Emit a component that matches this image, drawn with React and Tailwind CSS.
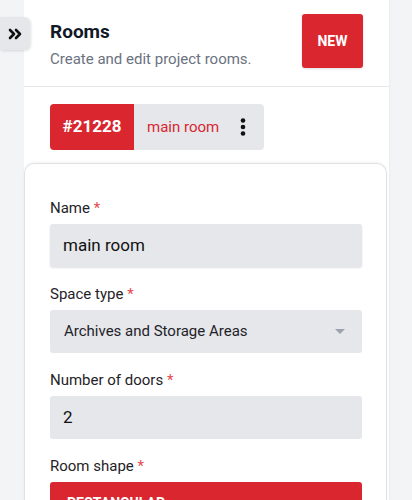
import React from "react";

function Label({ children }) {
  return (
    <div className="text-[15px] leading-[20px] text-[#1f2328] mb-[6px]">
      {children} <span className="text-[#e5484d]">*</span>
    </div>
  );
}

export default function App() {
  return (
    <div
      className="relative w-[412px] h-[500px] overflow-hidden bg-[#f3f4f6] flex"
      style={{ fontFamily: "Roboto, 'Liberation Sans', sans-serif" }}
    >
      <div className="w-[24px] shrink-0" />
      <div className="w-[365px] shrink-0 bg-white flex flex-col shadow-[1px_0_2px_rgba(0,0,0,0.04)]">
        <div className="shrink-0 flex justify-between items-start pl-[26px] pr-[26px] pt-[14px] h-[87px] border-b border-[#e5e7eb]">
          <div className="pt-[4px]">
            <div className="text-[19px] leading-[28px] font-bold text-[#111827]">Rooms</div>
            <div className="text-[15px] leading-[20px] text-[#6b7280] mt-[3px]">
              Create and edit project rooms.
            </div>
          </div>
          <button className="w-[61px] h-[54px] rounded-[3px] bg-[#d9262f] text-white text-[14px] font-bold shadow-sm">
            NEW
          </button>
        </div>
        <div className="shrink-0 pl-[26px] pt-[17px] h-[76px]">
          <div className="inline-flex h-[46px] rounded-[4px] overflow-hidden">
            <div className="w-[84px] bg-[#d9262f] text-white text-[17px] font-bold flex items-center justify-center">
              #21228
            </div>
            <div className="w-[130px] bg-[#e5e7eb] flex items-center pl-[13px]">
              <span className="text-[15px] text-[#d9262f]">main room</span>
              <svg className="ml-[12px]" width="24" height="24" viewBox="0 0 24 24" fill="#111">
                <circle cx="12" cy="5.5" r="2.3" />
                <circle cx="12" cy="12" r="2.3" />
                <circle cx="12" cy="18.5" r="2.3" />
              </svg>
            </div>
          </div>
        </div>
        <div className="shrink-0 h-[400px] w-[363px] rounded-t-[10px] border border-b-0 border-[#dfe1e5] shadow-[0_-1px_3px_rgba(0,0,0,0.05)] pt-[34px] pl-[25px] pr-[24px] flex flex-col gap-[17px]">
          <div>
            <Label>Name</Label>
            <div className="h-[43px] rounded-[3px] bg-[#e5e7eb] shadow-[0_1px_2px_rgba(0,0,0,0.12)] flex items-center px-[13px] text-[17px] text-[#111]">
              main room
            </div>
          </div>
          <div>
            <Label>Space type</Label>
            <div className="h-[43px] rounded-[3px] bg-[#e5e7eb] flex items-center justify-between px-[14px] text-[15px] text-[#1f2328]">
              <span>Archives and Storage Areas</span>
              <svg width="10" height="5" viewBox="0 0 10 5" className="mr-[3px]">
                <path d="M0 0 L10 0 L5 5 Z" fill="#9ca3af" />
              </svg>
            </div>
          </div>
          <div>
            <Label>Number of doors</Label>
            <div className="h-[43px] rounded-[3px] bg-[#e5e7eb] flex items-center px-[13px] text-[17px] text-[#111]">
              2
            </div>
          </div>
          <div>
            <Label>Room shape</Label>
            <div className="h-[43px] rounded-[3px] bg-[#d9262f] flex items-center px-[17px] text-[14px] font-bold text-white uppercase">
              Rectangular
            </div>
          </div>
        </div>
      </div>
      <button className="absolute left-0 top-[17px] w-[30px] h-[33px] bg-[#e5e7eb] rounded-r-[6px] shadow-[1px_1px_3px_rgba(0,0,0,0.12)] flex items-center justify-center">
        <svg width="14" height="12" viewBox="0 0 14 12" fill="none" stroke="#111" strokeWidth="2.6" strokeLinecap="round" strokeLinejoin="round">
          <path d="M2 2 L6 6 L2 10" />
          <path d="M8 2 L12 6 L8 10" />
        </svg>
      </button>
    </div>
  );
}
